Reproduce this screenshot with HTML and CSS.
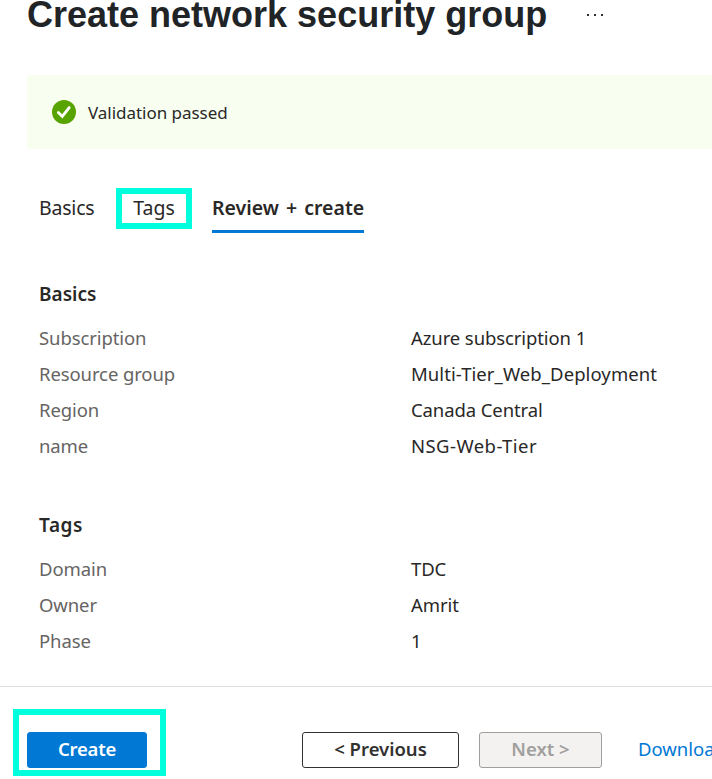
FILE: index.html
```html
<!DOCTYPE html>
<html lang="en">
<head>
<meta charset="utf-8">
<title>Create network security group</title>
<link rel="stylesheet" href="styles.css">
</head>
<body>
<header class="header">
  <h1 class="title">Create network security group</h1>
  <svg class="more" width="18" height="4" viewBox="0 0 18 4"><path d="M1 1h2v2H1zM8 1h2v2H8zM15 1h2v2h-2z" fill="#323130"/></svg>
</header>
<div class="banner">
  <svg width="24" height="24" viewBox="0 0 24 24"><circle cx="12" cy="12" r="12" fill="#57a300"/><path d="M6.3 12.4l4 4 6.9-8.8" fill="none" stroke="#fff" stroke-width="2.8" stroke-linecap="round" stroke-linejoin="miter"/></svg>
  <span class="banner-text">Validation passed</span>
</div>
<nav class="tabs">
  <a class="tab tab-basics">Basics</a>
  <a class="tab tab-tags">Tags</a>
  <a class="tab tab-active">Review + create</a>
</nav>
<main>
  <section class="section">
    <h2>Basics</h2>
    <dl>
      <dt>Subscription</dt><dd>Azure subscription 1</dd>
      <dt>Resource group</dt><dd class="wide-name">Multi-Tier_Web_Deployment</dd>
      <dt>Region</dt><dd>Canada Central</dd>
      <dt>name</dt><dd class="nsg-name">NSG-Web-Tier</dd>
    </dl>
  </section>
  <section class="section">
    <h2 class="tags-heading">Tags</h2>
    <dl>
      <dt>Domain</dt><dd>TDC</dd>
      <dt>Owner</dt><dd>Amrit</dd>
      <dt>Phase</dt><dd>1</dd>
    </dl>
  </section>
</main>
<footer class="footer">
  <div class="highlight"><button class="btn primary">Create</button></div>
  <button class="btn previous">&lt; Previous</button>
  <button class="btn next" disabled>Next &gt;</button>
  <a class="download">Download</a>
</footer>
</body>
</html>
```
FILE: styles.css
```css
* { box-sizing: border-box; }
body {
  margin: 0;
  height: 779px;
  overflow: hidden;
  background: #fff;
  color: #292827;
  font-family: "Noto Sans", "Open Sans", sans-serif;
  font-size: 18.5px;
  white-space: nowrap;
}
.header { display: flex; height: 75px; padding-left: 27px; }
.title {
  margin: -6px 0 0;
  font: bold 36px/42px "Liberation Sans", sans-serif;
  color: #212427;
}
.more { margin: 13px 0 0 39px; }
.banner {
  display: flex;
  align-items: center;
  gap: 12px;
  height: 74px;
  margin-left: 27px;
  padding-left: 25px;
  border-radius: 3px 0 0 3px;
  background: #f8fff0;
}
.banner-text { font-size: 17px; letter-spacing: -0.03px; }
.tabs { display: flex; align-items: flex-start; height: 118px; padding: 39px 0 0 39px; font-size: 19.5px; }
.tab { height: 41px; line-height: 39px; }
.tab-basics { width: 77px; letter-spacing: -0.2px; }
.tab-tags { width: 76px; margin-right: 20px; border: 6px solid #00ffdc; line-height: 27px; text-align: center; }
.tab-active {
  width: 152px;
  height: 45px;
  border-bottom: 3px solid #0078d4;
  font-weight: 600;
  word-spacing: 2px;
}
.section { height: 231px; padding: 14px 0 0 39px; }
h2 { margin: 0 0 12px; font-size: 19px; font-weight: 600; line-height: 27px; }
.tags-heading { letter-spacing: 0.6px; }
dl { display: grid; grid-template-columns: 372px 1fr; grid-auto-rows: 36px; line-height: 36px; margin: 0; letter-spacing: -0.1px; }
dt { color: #666463; }
dd { margin: 0; }
.wide-name { letter-spacing: 0.08px; }
.nsg-name { letter-spacing: 0.45px; }
main { height: 419px; }
.footer {
  display: flex;
  align-items: flex-start;
  height: 93px;
  overflow: hidden;
  border-top: 1px solid #dcdcdc;
  padding: 22px 0 0 13px;
}
.footer > * { flex-shrink: 0; }
.highlight { width: 153px; height: 67px; padding: 17px 0 0 8px; border: 6px solid #00ffdc; }
.btn {
  height: 36px;
  margin: 0;
  padding: 0;
  border: 1px solid #323130;
  border-radius: 3px;
  background: #fff;
  color: #323130;
  font: 600 18.5px/32px "Noto Sans", sans-serif;
  padding-bottom: 2px;
}
.primary { width: 120px; border-color: #0078d4; background: #0078d4; color: #fff; letter-spacing: -0.2px; }
.previous { width: 157px; margin: 23px 20px 0 136px; }
.next { width: 123px; margin: 23px 36px 0 0; border-color: #a19f9d; background: #f3f2f1; color: #a19f9d; }
.download { margin-top: 23px; line-height: 34px; color: #0078d4; }
```
